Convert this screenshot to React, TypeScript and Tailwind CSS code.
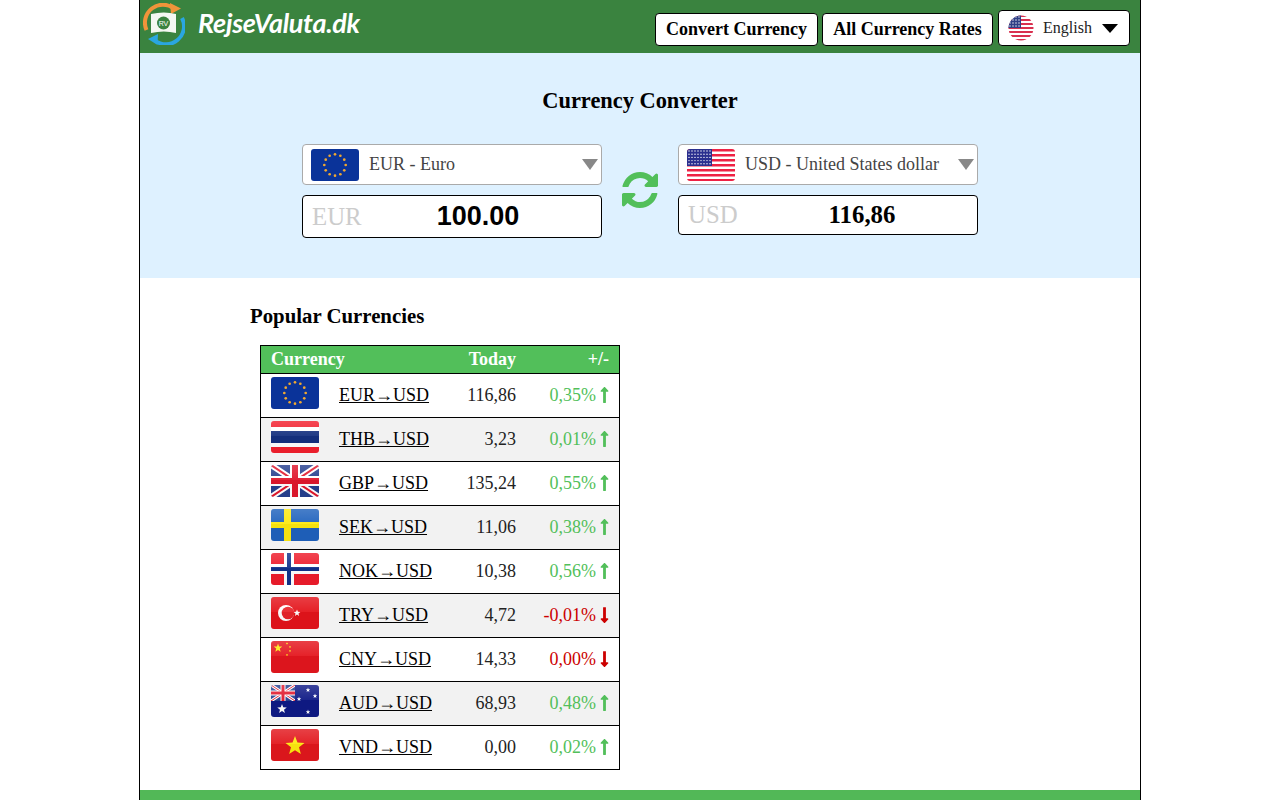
import React from "react";
import { FaLongArrowAltUp, FaLongArrowAltDown } from "react-icons/fa";

// shared gloss + rounded corners for the table flags
const FlagFrame: React.FC<{ id: string; children: React.ReactNode }> = ({ id, children }) => (
  <svg viewBox="0 0 48 32" width="48" height="32" className="block">
    <defs>
      <clipPath id={`clip-${id}`}>
        <rect width="48" height="32" rx="3" />
      </clipPath>
      <linearGradient id={`gloss-${id}`} x1="0" y1="0" x2="0" y2="1">
        <stop offset="0" stopColor="#fff" stopOpacity="0.18" />
        <stop offset="1" stopColor="#fff" stopOpacity="0.05" />
      </linearGradient>
    </defs>
    <g clipPath={`url(#clip-${id})`}>
      {children}
      <rect width="48" height="15" fill={`url(#gloss-${id})`} />
      <rect y="15" width="48" height="17" fill="#000" opacity="0.03" />
    </g>
  </svg>
);

const eurStars = Array.from({ length: 12 }, (_, i) => {
  const a = (i * Math.PI) / 6;
  return { x: 24 + 10.7 * Math.sin(a), y: 16 - 10.7 * Math.cos(a) };
});

const FlagEUR = () => (
  <svg viewBox="0 0 48 32" width="48" height="32" className="block">
    <rect width="48" height="32" rx="3" fill="#0a3399" />
    {eurStars.map((s, i) => (
      <circle key={i} cx={s.x} cy={s.y} r="1.35" fill="#f0a830" />
    ))}
  </svg>
);

const FlagUSD = () => (
  <svg viewBox="0 0 48 32" width="48" height="32" className="block">
    <defs>
      <clipPath id="clip-usd">
        <rect width="48" height="32" rx="3" />
      </clipPath>
    </defs>
    <g clipPath="url(#clip-usd)">
      <rect width="48" height="32" fill="#fff" />
      {[0, 5, 10, 15, 20, 25, 30].map((y) => (
        <rect key={y} y={y} width="48" height="2.5" fill="#ee2244" />
      ))}
      <rect width="25" height="17" fill="#2a2f8f" />
      {Array.from({ length: 5 }, (_, r) =>
        Array.from({ length: 8 }, (_, c) => (
          <circle key={`${r}-${c}`} cx={2 + c * 3} cy={2 + r * 3.2} r="0.7" fill="#fff" />
        ))
      )}
    </g>
  </svg>
);

const Star = ({ cx, cy, r, fill }: { cx: number; cy: number; r: number; fill: string }) => {
  const pts = Array.from({ length: 10 }, (_, i) => {
    const a = (i * Math.PI) / 5 - Math.PI / 2;
    const d = i % 2 ? r * 0.42 : r;
    return `${cx + d * Math.cos(a)},${cy + d * Math.sin(a)}`;
  }).join(" ");
  return <polygon points={pts} fill={fill} />;
};

const Union = () => (
  <>
    <rect width="48" height="32" fill="#27408f" />
    <path d="M0 0L48 32M48 0L0 32" stroke="#fff" strokeWidth="6" />
    <path d="M0 0L48 32M48 0L0 32" stroke="#e0182d" strokeWidth="2" />
    <path d="M24 0V32M0 16H48" stroke="#fff" strokeWidth="10" />
    <path d="M24 0V32M0 16H48" stroke="#e0182d" strokeWidth="6" />
  </>
);

const flags: Record<string, React.ReactNode> = {
  EUR: <FlagEUR />,
  THB: (
    <FlagFrame id="thb">
      <rect width="48" height="32" fill="#fff" />
      <rect width="48" height="6" fill="#f2202e" />
      <rect y="26" width="48" height="6" fill="#f2202e" />
      <rect y="10" width="48" height="12" fill="#14307f" />
    </FlagFrame>
  ),
  GBP: (
    <FlagFrame id="gbp">
      <Union />
    </FlagFrame>
  ),
  SEK: (
    <FlagFrame id="sek">
      <rect width="48" height="32" fill="#1f62bd" />
      <rect x="13" width="7" height="32" fill="#fde910" />
      <rect y="13" width="48" height="6" fill="#fde910" />
    </FlagFrame>
  ),
  NOK: (
    <FlagFrame id="nok">
      <rect width="48" height="32" fill="#ee1c2c" />
      <rect x="13" width="10" height="32" fill="#fff" />
      <rect y="11" width="48" height="10" fill="#fff" />
      <rect x="16" width="4" height="32" fill="#12338c" />
      <rect y="14" width="48" height="4" fill="#12338c" />
    </FlagFrame>
  ),
  TRY: (
    <FlagFrame id="try">
      <rect width="48" height="32" fill="#e4141b" />
      <circle cx="15" cy="16" r="8" fill="#fff" />
      <circle cx="17" cy="16" r="6.3" fill="#e8242a" />
      <Star cx={26} cy={16} r={3.6} fill="#fff" />
    </FlagFrame>
  ),
  CNY: (
    <FlagFrame id="cny">
      <rect width="48" height="32" fill="#e4161e" />
      <Star cx={7} cy={7} r={4.5} fill="#fde910" />
      <Star cx={16} cy={2.5} r={1.3} fill="#fde910" />
      <Star cx={19} cy={6} r={1.3} fill="#fde910" />
      <Star cx={19} cy={10} r={1.3} fill="#fde910" />
      <Star cx={16} cy={14} r={1.3} fill="#fde910" />
    </FlagFrame>
  ),
  AUD: (
    <FlagFrame id="aud">
      <rect width="48" height="32" fill="#0f1a86" />
      <svg x="0" y="0" width="24" height="16" viewBox="0 0 48 32" preserveAspectRatio="none">
        <Union />
      </svg>
      <Star cx={11} cy={24} r={5} fill="#fff" />
      <Star cx={37} cy={5} r={2.4} fill="#fff" />
      <Star cx={44} cy={11} r={2.4} fill="#fff" />
      <Star cx={28} cy={14} r={2.4} fill="#fff" />
      <Star cx={37} cy={27} r={2.4} fill="#fff" />
    </FlagFrame>
  ),
  VND: (
    <FlagFrame id="vnd">
      <rect width="48" height="32" fill="#e2171d" />
      <Star cx={24} cy={17} r={10} fill="#fde910" />
    </FlagFrame>
  ),
};

const rows = [
  { code: "EUR", rate: "116,86", change: "0,35%", up: true },
  { code: "THB", rate: "3,23", change: "0,01%", up: true },
  { code: "GBP", rate: "135,24", change: "0,55%", up: true },
  { code: "SEK", rate: "11,06", change: "0,38%", up: true },
  { code: "NOK", rate: "10,38", change: "0,56%", up: true },
  { code: "TRY", rate: "4,72", change: "-0,01%", up: false },
  { code: "CNY", rate: "14,33", change: "0,00%", up: false },
  { code: "AUD", rate: "68,93", change: "0,48%", up: true },
  { code: "VND", rate: "0,00", change: "0,02%", up: true },
];

const Logo = () => (
  <svg viewBox="0 0 42 42" width="42" height="42" className="block">
    <path d="M3.5 27A18 18 0 0 1 31 5.5" fill="none" stroke="#f0943a" strokeWidth="4" />
    <polygon points="27,0 38,5.5 28,11" fill="#f0943a" />
    <path d="M39 15A18 18 0 0 1 12 37.5" fill="none" stroke="#2aa6e0" strokeWidth="4" />
    <polygon points="15,31 5,36 14.5,42" fill="#2aa6e0" />
    <path d="M8 11Q21 8 33 11V30Q21 27 8 30Z" fill="#f4f7f2" />
    <circle cx="20.5" cy="20" r="6.5" fill="#3a833f" />
    <text x="20.5" y="22.5" textAnchor="middle" fontSize="7" fontFamily="Liberation Sans" fill="#fff">RV</text>
  </svg>
);

const RefreshIcon = () => (
  <svg viewBox="0 0 1792 1792" width="42" height="42" fill="#52bf5a" className="block">
    <path d="M1639 1056q0 5-1 7-64 268-268 434.5t-478 166.5q-146 0-282.5-55t-243.5-157l-129 129q-19 19-45 19t-45-19-19-45v-448q0-26 19-45t45-19h448q26 0 45 19t19 45-19 45l-137 137q71 66 161 102t187 36q134 0 250-65t186-179q11-17 53-117 8-23 30-23h192q13 0 22.5 9.5t9.5 22.5zm25-800v448q0 26-19 45t-45 19h-448q-26 0-45-19t-19-45 19-45l138-138q-148-137-349-137-134 0-250 65t-186 179q-11 17-53 117-8 23-30 23h-199q-13 0-22.5-9.5t-9.5-22.5v-7q65-268 270-434.5t480-166.5q146 0 284 55.5t245 156.5l130-129q19-19 45-19t45 19 19 45z" />
  </svg>
);

const SelectBox = ({ flag, label }: { flag: React.ReactNode; label: string }) => (
  <div className="flex h-[41px] items-center rounded-[4px] border border-[#aaaaaa] bg-white pl-2 pr-[3px]">
    {flag}
    <span className="ml-[10px] flex-1 text-[18px] text-[#444444]">{label}</span>
    <span className="h-0 w-0 border-x-[8px] border-t-[11px] border-x-transparent border-t-[#888888]" />
  </div>
);

export default function App() {
  return (
    <div className="mx-auto h-[800px] w-[1002px] overflow-hidden border-x border-black bg-white font-['Liberation_Serif',serif] text-[18px] text-black">
      <header className="flex h-[53px] items-start justify-between bg-[#3a833f] pr-[10px]">
        <div className="flex items-center pl-[3px] pt-[3px]">
          <Logo />
          <span className="ml-[13px] -mt-[2px] font-['Lato',sans-serif] text-[27px] font-bold italic tracking-[-0.3px] text-white">
            RejseValuta.dk
          </span>
        </div>
        <nav className="flex items-end gap-1 pt-[10px]">
          <a className="flex h-[33px] w-[163px] items-center justify-center rounded-[4px] border border-black bg-white text-[18px] font-bold">
            Convert Currency
          </a>
          <a className="flex h-[33px] w-[171px] items-center justify-center rounded-[4px] border border-black bg-white text-[18px] font-bold">
            All Currency Rates
          </a>
          <div className="ml-px flex h-9 w-[132px] items-center rounded-[4px] border border-black bg-white pl-[9px]">
            <svg viewBox="0 0 26 26" width="26" height="26" className="block shrink-0">
              <defs>
                <clipPath id="lang-clip">
                  <circle cx="13" cy="13" r="12.5" />
                </clipPath>
              </defs>
              <g clipPath="url(#lang-clip)">
                <rect width="26" height="26" fill="#fff" />
                {[0, 4, 8, 12, 16, 20, 24].map((y) => (
                  <rect key={y} y={y} width="26" height="2" fill="#d9304f" />
                ))}
                <rect width="13" height="13" fill="#2f3f86" />
                {[2, 5, 8, 11].map((y) =>
                  [2, 5, 8, 11].map((x) => <circle key={`${x}-${y}`} cx={x} cy={y} r="0.7" fill="#fff" />)
                )}
              </g>
            </svg>
            <span className="ml-[9px] text-[16px] text-[#222222]">English</span>
            <span className="ml-[10px] h-0 w-0 border-x-[8.5px] border-t-[9px] border-x-transparent border-t-black" />
          </div>
        </nav>
      </header>

      {/* Converter */}
      <section className="h-[225px] bg-[#def1ff] pt-[33px]">
        <h1 className="text-center text-[22.4px] font-bold leading-[30px]">Currency Converter</h1>
        <div className="mt-[28px] flex justify-center">
          <div className="flex w-[300px] flex-col gap-[10px]">
            <SelectBox flag={<FlagEUR />} label="EUR - Euro" />
            <div className="flex h-[43px] items-center rounded-[4px] border border-black bg-white pl-[9px]">
              <span className="w-[111px] text-[24.8px] text-[#cccccc]">EUR</span>
              <span className="w-[110px] text-center font-['Liberation_Sans',sans-serif] text-[27px] font-bold">100.00</span>
            </div>
          </div>
          <div className="flex w-[76px] justify-center pt-[25px]">
            <RefreshIcon />
          </div>
          <div className="flex w-[300px] flex-col gap-[10px]">
            <SelectBox flag={<FlagUSD />} label="USD - United States dollar" />
            <div className="flex h-[40px] items-center rounded-[4px] border border-black bg-white pl-[9px]">
              <span className="w-[111px] text-[24.8px] text-[#cccccc]">USD</span>
              <span className="w-[126px] text-center text-[24.8px] font-bold">116,86</span>
            </div>
          </div>
        </div>
      </section>

      {/* Popular table */}
      <section className="pl-[110px] pt-[24px]">
        <h2 className="text-[20.8px] font-bold leading-[28px]">Popular Currencies</h2>
        <table className="ml-[10px] mt-[15px] w-[360px] table-fixed border-collapse border border-black">
          <colgroup>
            <col className="w-[78.5px]" />
            <col className="w-[109px]" />
            <col className="w-[68px]" />
            <col />
          </colgroup>
          <thead>
            <tr className="h-[28px] bg-[#52bf5a] text-white">
              <th colSpan={2} className="pl-[10px] text-left font-bold">Currency</th>
              <th className="text-right font-bold">Today</th>
              <th className="pr-[10px] text-right font-bold">+/-</th>
            </tr>
          </thead>
          <tbody>
            {rows.map((row, i) => (
              <tr key={row.code} className={`h-[44px] border-t border-black ${i % 2 === 1 ? "bg-[#f2f2f2]" : "bg-white"}`}>
                <td className="pl-[10px] pb-[8px] pt-[3px] align-top">{flags[row.code]}</td>
                <td>
                  <a className="underline">
                    {row.code}
                    <span>→</span>
                    USD
                  </a>
                </td>
                <td className="text-right text-[#222222]">{row.rate}</td>
                <td className={`pr-[10px] ${row.up ? "text-[#52bf5a]" : "text-[#cc0000]"}`}>
                  <span className="flex items-center justify-end">
                    {row.change}
                    {row.up ? (
                      <FaLongArrowAltUp className="ml-[4px] -mt-[2px] h-[18px] w-[9px]" />
                    ) : (
                      <FaLongArrowAltDown className="ml-[4px] -mt-[2px] h-[18px] w-[9px]" />
                    )}
                  </span>
                </td>
              </tr>
            ))}
          </tbody>
        </table>
      </section>

      <footer className="mt-[20px] h-[10px] bg-[#52b857]" />
    </div>
  );
}
